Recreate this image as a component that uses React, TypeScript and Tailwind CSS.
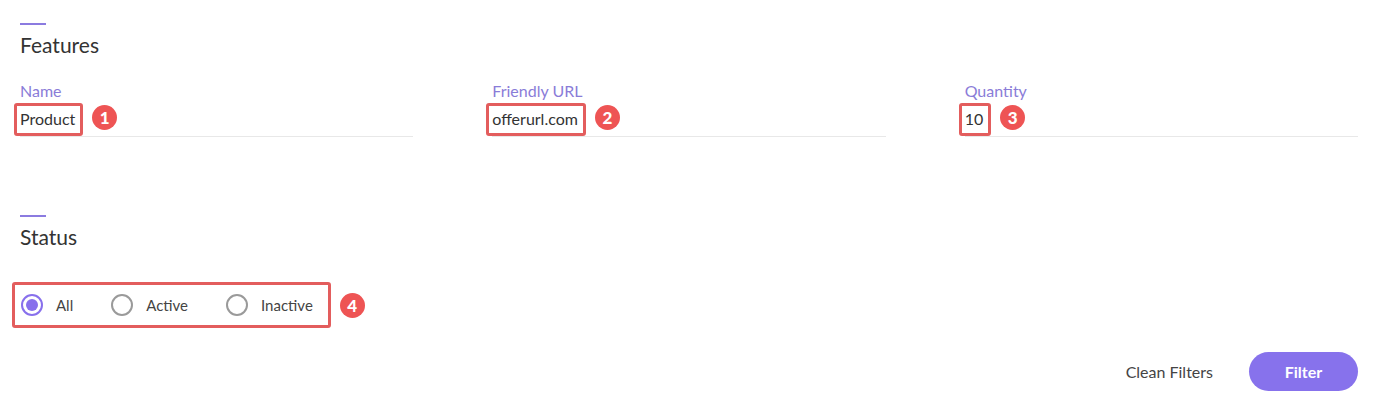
import React, { useState } from 'react';

// Filter panel: features inputs + status radios, with numbered annotation marks.

type Field = { label: string; value: string; mark: number };

const fields: Field[] = [
  { label: 'Name', value: 'Product', mark: 1 },
  { label: 'Friendly URL', value: 'offerurl.com', mark: 2 },
  { label: 'Quantity', value: '10', mark: 3 },
];

const statuses = ['All', 'Active', 'Inactive'];

function Mark({ n }: { n: number }) {
  return (
    <span className="flex h-[25px] w-[25px] shrink-0 items-center justify-center rounded-full bg-[#ee5454] text-[17px] font-black leading-none text-white">
      {n}
    </span>
  );
}

function SectionTitle({ children }: { children: React.ReactNode }) {
  return (
    <div>
      <div className="h-[2px] w-[26px] bg-[#8b7be0]" />
      <h2 className="mt-[6px] text-[21px] leading-[28px] text-[#333]">{children}</h2>
    </div>
  );
}

export default function App() {
  const [status, setStatus] = useState('All');

  return (
    <div className="min-h-[415px] bg-white pl-5 pr-[37px] pt-[23px] font-['Lato','Noto_Sans',sans-serif]">
      <SectionTitle>Features</SectionTitle>

      <div className="mt-[22px] grid grid-cols-3 gap-x-[79px]">
        {fields.map(f => (
          <div key={f.label}>
            <div className="text-[16px] leading-[20px] text-[#8a7cd8]">{f.label}</div>
            <div className="mt-[2px] flex items-start border-b border-[#e8e8e8]">
              <span className="-ml-[6px] rounded-[3px] border-[3px] border-[#e35d5d] pb-[4px] pl-[3px] pr-[5px] pt-[3px] text-[16px] leading-[20px] text-[#333]">
                {f.value}
              </span>
              <span className="ml-[9px] mt-[2px]">
                <Mark n={f.mark} />
              </span>
            </div>
          </div>
        ))}
      </div>

      <div className="mt-[78px]">
        <SectionTitle>Status</SectionTitle>
      </div>

      <div className="mt-[31px] flex items-center">
        <div className="-ml-[8px] flex items-center rounded-[3px] border-[3px] border-[#e35d5d] py-[9px] pl-[6px] pr-[15px]">
          {statuses.map((s, i) => (
            <label key={s} className={`flex cursor-pointer items-center ${i > 0 ? 'ml-[38px]' : ''}`} onClick={() => setStatus(s)}>
              <span
                className={`flex h-[22px] w-[22px] items-center justify-center rounded-full border-2 ${
                  status === s ? 'border-[#8870ec]' : 'border-[#9a9a9a]'
                }`}
              >
                {status === s && <span className="h-[12px] w-[12px] rounded-full bg-[#8870ec]" />}
              </span>
              <span className="ml-[13px] text-[15px] leading-[22px] text-[#444]">{s}</span>
            </label>
          ))}
        </div>
        <span className="ml-[9px]">
          <Mark n={4} />
        </span>
      </div>

      <div className="mt-[24px] flex items-center justify-end">
        <button className="mr-[36px] text-[16px] text-[#444]">Clean Filters</button>
        <button className="h-[39px] w-[109px] rounded-full bg-[#8772ec] text-[16px] font-bold text-white">Filter</button>
      </div>
    </div>
  );
}
